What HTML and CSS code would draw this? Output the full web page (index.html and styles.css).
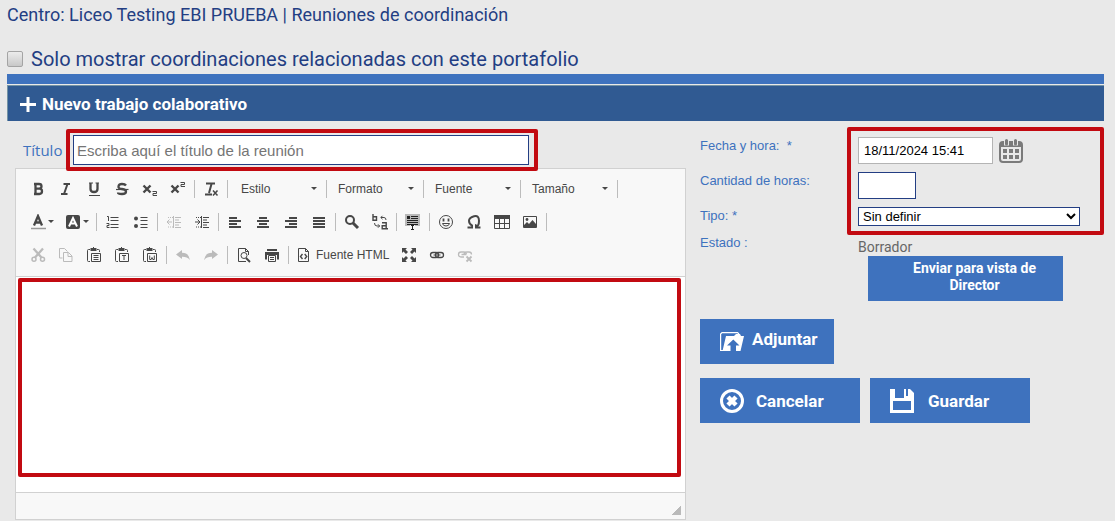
FILE: index.html
```html
<!DOCTYPE html>
<html lang="es">
<head>
<meta charset="utf-8">
<title>Reuniones de coordinación</title>
<link rel="stylesheet" href="styles.css">
</head>
<body>
<h1 class="page-title">Centro: Liceo Testing EBI PRUEBA | Reuniones de coordinación</h1>
<div class="filter">
  <input type="checkbox" id="solo" class="filter-check">
  <label for="solo">Solo mostrar coordinaciones relacionadas con este portafolio</label>
</div>
<div class="stripe"></div>
<h2 class="panel-head">
  <svg width="17" height="17" viewBox="0 0 17 17"><path d="M8 2v15M0 9.500h16" stroke="#fff" stroke-width="3"/></svg>
  Nuevo trabajo colaborativo
</h2>
<main class="form">
  <section class="left">
    <div class="title-row">
      <label for="titulo">Título</label>
      <div class="mark-title"><input id="titulo" type="text" placeholder="Escriba aquí el título de la reunión"></div>
    </div>
    <div class="editor">
      <div class="toolbar">
        <div class="tools">
          <button class="tool" aria-label="Negrita"><svg viewBox="0 0 16 16"><path d="M5.500 2v12M4 3h5q2.500 0 2.500 2.300T9 7.700H5h4.300q2.700 0 2.700 2.600T9.300 13H4" fill="none" stroke-width="2.300"/></svg></button>
          <button class="tool" aria-label="Cursiva"><svg viewBox="0 0 16 16"><path d="M5.500 3h6.500M3 13h6.500M9.500 3L6 13" fill="none" stroke-width="2"/></svg></button>
          <button class="tool" aria-label="Subrayado"><svg viewBox="0 0 16 16"><path d="M4.500 2v6q0 3 3.500 3t3.500-3V2" fill="none" stroke-width="2.300"/><path d="M3 2h4M9.500 2H13M3 14.500h11" stroke-width="1"/></svg></button>
          <button class="tool" aria-label="Tachado"><svg viewBox="0 0 16 16"><path d="M12 4.500Q11 3 8 3T4.500 5.300 8 8t4 2.700T8 13t-4-1.600" fill="none" stroke-width="2.300"/><path d="M2 8.500h12.500" stroke-width="1.200"/></svg></button>
          <button class="tool" aria-label="Subíndice"><svg viewBox="0 0 16 16"><path d="M1.500 4.500l7 7M8.500 4.500l-7 7" stroke-width="2.400"/><path d="M10.500 10.500h4v2h-3.500v2h4" fill="none"/></svg></button>
          <button class="tool" aria-label="Superíndice"><svg viewBox="0 0 16 16"><path d="M1.500 4.500l7 7M8.500 4.500l-7 7" stroke-width="2.400"/><path d="M10.500 1.500h4v2h-3.500v2h4" fill="none"/></svg></button>
          <i class="sep"></i>
          <button class="tool" aria-label="Eliminar formato"><svg viewBox="0 0 16 16"><path d="M3 2.500h9M8.500 3L6 12M2 13.500h7" stroke-width="2"/><path d="M10 9.500l4.500 5M14.500 9.500l-4.500 5" stroke-width="1.500"/></svg></button>
          <i class="sep"></i>
          <button class="combo combo-first"><span>Estilo</span><i class="caret"></i></button><i class="sep"></i>
          <button class="combo"><span>Formato</span><i class="caret"></i></button><i class="sep"></i>
          <button class="combo"><span>Fuente</span><i class="caret"></i></button><i class="sep"></i>
          <button class="combo"><span>Tamaño</span><i class="caret"></i></button><i class="sep"></i>
        </div>
        <div class="tools">
          <button class="tool wide" aria-label="Color de texto"><svg viewBox="0 0 16 16"><path d="M4 11.500L8 2l4 9.500M5 8.500h6" fill="none" stroke-width="2.300"/><path d="M1 14.500h15" stroke="#999" stroke-width="1.500"/></svg><i class="caret"></i></button>
          <button class="tool wide" aria-label="Color de fondo"><svg viewBox="0 0 16 16"><rect x="1" y="1" width="14" height="14" rx="2" fill="#474747" stroke="none"/><path d="M4 12.500L8 4l4 8.500M5.500 9.500h5" fill="none" stroke="#fff" stroke-width="2"/></svg><i class="caret"></i></button>
          <i class="sep"></i>
          <button class="tool" aria-label="Lista numerada"><svg viewBox="0 0 16 16"><path d="M5.500 3.500h8M5.500 6.500h8M5.500 10.500h8M5.500 13.500h8M2 2.500h1.500v4.500M1.500 9.500H4v2H2v2h2.500" fill="none"/></svg></button>
          <button class="tool" aria-label="Viñetas"><svg viewBox="0 0 16 16"><path d="M7.500 3.500h7M7.500 6.500h7M7.500 10.500h7M7.500 13.500h7"/><circle cx="3" cy="4.500" r="2" fill="#474747" stroke="none"/><circle cx="3" cy="12" r="2" fill="#474747" stroke="none"/></svg></button>
          <i class="sep"></i>
          <button class="tool off" disabled aria-label="Reducir sangría"><svg viewBox="0 0 16 16"><path d="M7.500 2v12M9 3.500h6M9 6h4M9 8.500h6M9 11h4M9 13.500h6M1 8h5M3.500 5.500L1 8l2.500 2.500" fill="none"/><path d="M2 3.500h5M2 13h5" stroke-dasharray="1 1"/></svg></button>
          <button class="tool" aria-label="Aumentar sangría"><svg viewBox="0 0 16 16"><path d="M7.500 2v12M9 3.500h6M9 6h4M9 8.500h6M9 11h4M9 13.500h6M1 8h5M3.500 5.500L6 8l-2.500 2.500" fill="none"/><path d="M2 3.500h5M2 13h5" stroke-dasharray="1 1"/></svg></button>
          <i class="sep"></i>
          <button class="tool" aria-label="Izquierda"><svg viewBox="0 0 16 16"><path d="M2 4h8M2 7h12M2 10h8M2 13h12" stroke-width="2"/></svg></button>
          <button class="tool" aria-label="Centrar"><svg viewBox="0 0 16 16"><path d="M4 4h8M2 7h12M4 10h8M2 13h12" stroke-width="2"/></svg></button>
          <button class="tool" aria-label="Derecha"><svg viewBox="0 0 16 16"><path d="M6 4h8M2 7h12M6 10h8M2 13h12" stroke-width="2"/></svg></button>
          <button class="tool" aria-label="Justificar"><svg viewBox="0 0 16 16"><path d="M2 4h12M2 7h12M2 10h12M2 13h12" stroke-width="2"/></svg></button>
          <i class="sep"></i>
          <button class="tool" aria-label="Buscar"><svg viewBox="0 0 16 16"><circle cx="6" cy="6" r="4" fill="none" stroke-width="2"/><path d="M9 9l5 5" stroke-width="3"/></svg></button>
          <button class="tool" aria-label="Reemplazar"><svg viewBox="0 0 16 16"><path d="M1 0v6.300h3.500V2.800H1M10 8.700h4.200v6h-4v-3h4v3H16" fill="none" stroke-width="1.400"/><path d="M9 3.500h3q2 0 2 2.500M10.500 1.800L8.800 3.500l1.700 1.700M2.500 9q0 3 2.500 3h2.500M6 10.300L7.700 12 6 13.700" fill="none"/></svg></button>
          <i class="sep"></i>
          <button class="tool" aria-label="Seleccionar todo"><svg viewBox="0 0 16 16"><path fill="#b9b9b9" stroke="none" d="M0 0h15v12H0z"/><path d="M6 2.500h7M6 4.500h7M2 6.500h11M2 8.500h11M2 10.500h11" stroke="#222"/><path d="M2 2h3v3H2z" fill="#222" stroke="none"/><path d="M5 11h5v5H5z" fill="#f8f8f8" stroke="none"/><path d="M6 11.500h3M7.500 11.500v4M6 15.500h3" stroke="#222"/></svg></button>
          <i class="sep"></i>
          <button class="tool" aria-label="Emoticono"><svg viewBox="0 0 16 16"><circle cx="8" cy="8" r="6.500" fill="none"/><path d="M4.500 9.500q.5 2.500 3.500 2.500t3.500-2.500z" fill="none"/><path d="M5.500 4.500v3M10.500 4.500v3" stroke-width="1.800"/></svg></button>
          <button class="tool" aria-label="Carácter especial"><svg viewBox="0 0 16 16"><path d="M1.500 13.500H6v-2Q3 10 3 6.800T8 2.200t5 4.600-3 4.700v2h4.500" fill="none" stroke-width="2"/></svg></button>
          <button class="tool" aria-label="Tabla"><svg viewBox="0 0 16 16"><path d="M.5 2v12.500h15V2M5.500 5v9.500M10.500 5v9.500M.5 9.500h15" fill="none"/><path d="M0 3h16" stroke-width="4"/></svg></button>
          <button class="tool" aria-label="Imagen"><svg viewBox="0 0 16 16"><path d="M1.500 2.500h13v11h-13z" fill="none"/><path d="M2 13V11l3-3 2 2 3.500-4L14 10v3z" fill="#474747" stroke="none"/><circle cx="5" cy="5.500" r="1.400" fill="#474747" stroke="none"/></svg></button>
          <i class="sep"></i>
        </div>
        <div class="tools">
          <button class="tool off" disabled aria-label="Cortar"><svg viewBox="0 0 16 16"><path d="M3.500 1.500l8 9M13 1.500l-8 9" stroke-width="2.300"/><circle cx="4" cy="12.300" r="2" fill="none" stroke-width="1.500"/><circle cx="12.500" cy="12.300" r="2" fill="none" stroke-width="1.500"/></svg></button>
          <button class="tool off" disabled aria-label="Copiar"><svg viewBox="0 0 16 16"><path d="M4.500 11H1.500V1.500h5l3 3M5.500 5.500h5l3.500 3.500v5.500H5.500zM10 5.500v4h4" fill="none"/></svg></button>
          <button class="tool" aria-label="Pegar"><svg viewBox="0 0 16 16"><path d="M4 14.500H2.500q-1 0-1-1v-10q0-1 1-1H4M11 2.500h1.500q1 0 1 1V5M5.500 6.500h9v8h-9zM7.500 8.500h5M7.500 10.500h5M7.500 12.500h5" fill="none"/><path d="M4.500 2.500h6M7 1h1" stroke-width="3"/></svg></button>
          <button class="tool" aria-label="Pegar como texto"><svg viewBox="0 0 16 16"><path d="M4 14.500H2.500q-1 0-1-1v-10q0-1 1-1H4M11 2.500h1.500q1 0 1 1V5M5.500 6.500h9v8h-9zM8 8.500h4M10 9v4" fill="none"/><path d="M4.500 2.500h6M7 1h1" stroke-width="3"/></svg></button>
          <button class="tool" aria-label="Pegar desde Word"><svg viewBox="0 0 16 16"><path d="M4 14.500H2.500q-1 0-1-1v-10q0-1 1-1H4M11 2.500h1.500q1 0 1 1V5M5.500 6.500h9v8h-9zM7.700 8.500v4h1.500l.8-2 .8 2h1.500v-4" fill="none"/><path d="M4.500 2.500h6M7 1h1" stroke-width="3"/></svg></button>
          <i class="sep"></i>
          <button class="tool off" disabled aria-label="Deshacer"><svg viewBox="0 0 16 16"><path d="M1 7.500L7 3v2.800q7 0 8 7.200-3-3.500-8-3.300V12z" fill="#bbb" stroke="none"/></svg></button>
          <button class="tool off" disabled aria-label="Rehacer"><svg viewBox="0 0 16 16"><path d="M15 7.500L9 3v2.800Q2 5.800 1 13q3-3.500 8-3.300V12z" fill="#bbb" stroke="none"/></svg></button>
          <i class="sep"></i>
          <button class="tool" aria-label="Vista previa"><svg viewBox="0 0 16 16"><path d="M12.500 8V4.500l-3-3h-7v13H10M9.500 1.500v3h3" fill="none"/><circle cx="8" cy="8.500" r="3" fill="none"/><path d="M10 11l4 4" stroke-width="2"/></svg></button>
          <button class="tool" aria-label="Imprimir"><svg viewBox="0 0 16 16"><path d="M3 2h10v2H3zM1 5h14v7.500h-2V8H3v4.500H1z" fill="#474747" stroke="none"/><path d="M4.500 8.500h7v6h-7zM6 10.500h4M6 12.500h4" fill="none"/></svg></button>
          <i class="sep"></i>
          <button class="source"><svg viewBox="0 0 16 16"><path d="M2.500 1.500h7l3 3v10h-10zM9.500 1.500v3h3" fill="none"/><path d="M6.500 7L4.500 9.500l2 2.500M8.700 7l2 2.500-2 2.500" fill="none" stroke-width="1.400"/></svg>Fuente HTML</button>
          <button class="tool" aria-label="Maximizar"><svg viewBox="0 0 16 16"><path d="M1 1h5L4.500 2.500 7 5 5 7 2.500 4.500 1 6zM15 1v5l-1.500-1.500L11 7 9 5l2.500-2.500L10 1zM1 15v-5l1.500 1.500L5 9l2 2-2.500 2.500L6 15zM15 15h-5l1.500-1.500L9 11l2-2 2.500 2.500L15 10z" fill="#474747" stroke="none"/></svg></button>
          <button class="tool" aria-label="Vínculo"><svg viewBox="0 0 16 16"><rect x="1.500" y="5.500" width="8" height="5" rx="2.500" fill="none" stroke-width="1.300"/><rect x="6.500" y="5.500" width="8" height="5" rx="2.500" fill="none" stroke-width="1.300"/><path d="M4.500 8h7"/></svg></button>
          <button class="tool off" disabled aria-label="Quitar vínculo"><svg viewBox="0 0 16 16"><path d="M7 10H4Q1.500 10 1.500 7.500T4 5h3q2 0 2.500 2M7 8q0-3 3-3h2q2.500 0 2.500 2.500M4.500 7.500h5" fill="none" stroke-width="1.300"/><path d="M9.500 9.500l5 5M14.500 9.500l-5 5" stroke-width="1.800"/></svg></button>
        </div>
      </div>
      <div class="content"><textarea class="mark-area" aria-label="Contenido de la reunión"></textarea></div>
      <div class="editor-foot"><i class="grip"></i></div>
    </div>
  </section>
  <section class="right">
    <div class="fields">
      <label for="fecha">Fecha y hora: &nbsp;*</label>
      <div class="date"><input id="fecha" type="text" value="18/11/2024 15:41">
        <button class="cal" aria-label="Abrir calendario"><svg width="24" height="24" viewBox="0 0 24 24"><rect x="1" y="3" width="22" height="20" rx="3" fill="none" stroke="#7b7b7b" stroke-width="2"/><path d="M1 4h22v4H1z" fill="#7b7b7b"/><path d="M7.500 0v6.500M16.500 0v6.500" stroke="#e9e9e9" stroke-width="5"/><path d="M7.500 1.500v3.500M16.500 1.500v3.500" stroke="#7b7b7b" stroke-width="3" stroke-linecap="round"/><path d="M4 10h4v4H4zM10 10h4v4h-4zM16 10h4v4h-4zM4 16h4v4H4zM10 16h4v4h-4zM16 16h4v4h-4z" fill="#7b7b7b"/></svg></button></div>
      <label for="horas">Cantidad de horas:</label>
      <input id="horas" class="hours" type="text">
      <label for="tipo">Tipo: *</label>
      <select id="tipo"><option>Sin definir</option></select>
      <div class="mark-fields"></div>
      <span>Estado :</span>
      <div class="state"><span>Borrador</span><button class="btn send">Enviar para vista de Director</button></div>
    </div>
    <div class="actions">
      <button class="btn attach"><svg width="24" height="20" viewBox="0 0 24 20"><path d="M3 18.500H.6V2L2 .6h15.500L19 2" fill="none" stroke="#fff" stroke-width="1.200"/><path d="M6 4h8l2-2h4l1 2h3l-3.500 15H16v-5.500h3.500l-6.200-6-6.300 6h3.500V19h-8z" fill="#fff"/></svg>Adjuntar</button>
    </div>
    <div class="actions">
      <button class="btn action"><svg width="24" height="24" viewBox="0 0 24 24"><circle cx="12" cy="12" r="10.500" fill="none" stroke="#fff" stroke-width="3"/><path d="M8 8l8 8M16 8l-8 8" stroke="#fff" stroke-width="4.500"/></svg>Cancelar</button>
      <button class="btn action save"><svg width="24" height="24" viewBox="0 0 24 24"><path fill-rule="evenodd" d="M0 0h5v9h14V0h1l4 4v20H0zM3 12v9h18v-9zM14 0h5v9h-5zM16 0v7h2V0z" fill="#fff"/></svg>Guardar</button>
    </div>
  </section>
</main>
</body>
</html>
```
FILE: styles.css
```css
* { box-sizing: border-box; }
body {
  margin: 0;
  padding: 0 11px 0 7px;
  background: #e9e9e9;
  font-family: "Liberation Sans", Arial, sans-serif;
  font-size: 13px;
  color: #3e72be;
}
button, input, select, textarea { font: inherit; margin: 0; }
button { border: 0; padding: 0; background: none; color: inherit; }
svg { display: block; flex: none; }

.page-title {
  margin: 0;
  padding-top: 4px;
  font: 400 18px/22px Roboto, sans-serif;
  color: #233e83;
}
.filter {
  display: flex;
  align-items: center;
  gap: 8px;
  margin-top: 18px;
  height: 30px;
  font: 400 20px/30px Roboto, sans-serif;
  color: #233e83;
}
.filter-check {
  appearance: none;
  width: 16px;
  height: 16px;
  border: 1px solid #a4a4a4;
  border-radius: 2px;
  background: linear-gradient(#ececec, #c8c8c8);
}
.stripe { height: 10px; background: #3e72be; }
.panel-head {
  display: flex;
  align-items: center;
  gap: 5px;
  margin: 1px 0 0;
  padding: 0 12px;
  height: 36px;
  border-top: 1px solid #7493a4;
  border-left: 1px solid #7493a4;
  background: #305a92;
  color: #fff;
  font: 700 17px/34px Roboto, sans-serif;
}

.form {
  display: grid;
  grid-template-columns: minmax(0, 671fr) minmax(0, 404fr);
  gap: 14px;
  padding: 8px 0 0 8px;
}
.title-row {
  display: flex;
  align-items: center;
  padding-left: 8px;
  font: 400 15px/24px "Open Sans", sans-serif;
}
.title-row label { width: 43px; }
.mark-title {
  flex: 0 1 472px;
  padding: 2px 5px 2px 3px;
  border: 4px solid #c20a11;
  border-radius: 2px;
  position: relative;
}
.mark-title input {
  display: block;
  width: 100%;
  height: 30px;
  padding: 0 3px;
  border: 1px solid #233e83;
  background: #fff;
  font: 15px "Liberation Sans", Arial, sans-serif;
}
.mark-title input::placeholder { color: #757575; }

.editor {
  margin-top: -3px;
  border: 1px solid #d1d1d1;
  background: #fff;
}
.toolbar {
  padding: 3px 8px 5px;
  background: #f8f8f8;
  border-bottom: 1px solid #d1d1d1;
  color: #474747;
  font-size: 12px;
}
.tools { display: flex; flex-wrap: wrap; align-items: center; min-height: 33px; }
.tool {
  display: flex;
  align-items: center;
  justify-content: center;
  width: 28px;
  height: 28px;
}
.tool svg, .source svg { width: 16px; height: 16px; stroke: #474747; }
.off svg { stroke: #bbb; }
.wide { width: 35px; gap: 2px; }
.sep { width: 1px; height: 18px; margin: 0 2px; background: #bcbcbc; }
.caret {
  border: 3px solid transparent;
  border-top-color: #474747;
  border-bottom: 0;
}
.combo {
  display: flex;
  align-items: center;
  justify-content: space-between;
  width: 92px;
  height: 28px;
  padding: 0 7px 0 9px;
}
.combo-first { margin-left: 2px; }
.source {
  display: flex;
  align-items: center;
  gap: 4px;
  height: 28px;
  padding: 0 6px 0 5px;
}
.content { padding: 1px 4px 15px 2px; }
.mark-area {
  display: block;
  width: 100%;
  height: 199px;
  border: 4px solid #c20a11;
  border-radius: 2px;
  background: #fff;
  resize: none;
  outline: 0;
}
.editor-foot {
  display: flex;
  justify-content: flex-end;
  align-items: flex-end;
  height: 27px;
  padding: 4px;
  border-top: 1px solid #d1d1d1;
  background: #f8f8f8;
}
.grip {
  width: 10px;
  height: 10px;
  background: linear-gradient(135deg, transparent 50%, #bababa 50%);
}

.fields {
  display: grid;
  grid-template-columns: 158px minmax(0, 1fr);
  row-gap: 8px;
  padding-top: 8px;
  line-height: 17px;
  justify-items: start;
}
.fields input { height: 27px; border: 1px solid #233e83; padding: 0 5px; background: #fff; color: #000; }
.date { display: flex; align-items: center; gap: 6px; }
.fields .date input { width: 135px; border-color: #b4b4b4; }
.fields .hours { width: 58px; }
.fields select {
  width: 222px;
  max-width: 100%;
  height: 19px;
  padding: 0;
  border: 1px solid #233e83;
  border-radius: 0;
  background: #fff;
  color: #000;
}
.mark-fields {
  grid-column: 2;
  grid-row: 1 / 4;
  justify-self: stretch;
  margin: -10px 0 -9px -11px;
  border: 4px solid #c20a11;
  border-radius: 2px;
  pointer-events: none;
}
.date { grid-column: 2; grid-row: 1; }
.hours { grid-column: 2; grid-row: 2; }
.fields select { grid-column: 2; grid-row: 3; }
.state { padding-top: 5px; color: #666; font: 14px/17px Roboto, sans-serif; }
.btn {
  background: #3e72be;
  color: #fff;
  font: 700 17px/20px Roboto, sans-serif;
}
.send {
  display: block;
  width: 195px;
  height: 45px;
  margin-left: 10px;
  padding: 0 20px 3px 38px;
  font-size: 14px;
  line-height: 17px;
}
.actions { display: flex; flex-wrap: wrap; gap: 10px; margin-top: 14px; }
.fields + .actions { margin-top: 18px; }
.attach, .action { display: flex; align-items: center; height: 45px; padding: 0 16px 0 20px; }
.attach { gap: 8px; padding-bottom: 5px; }
.attach svg { margin-top: 6px; }
.action { width: 160px; gap: 12px; }
.save { gap: 14px; }
```
